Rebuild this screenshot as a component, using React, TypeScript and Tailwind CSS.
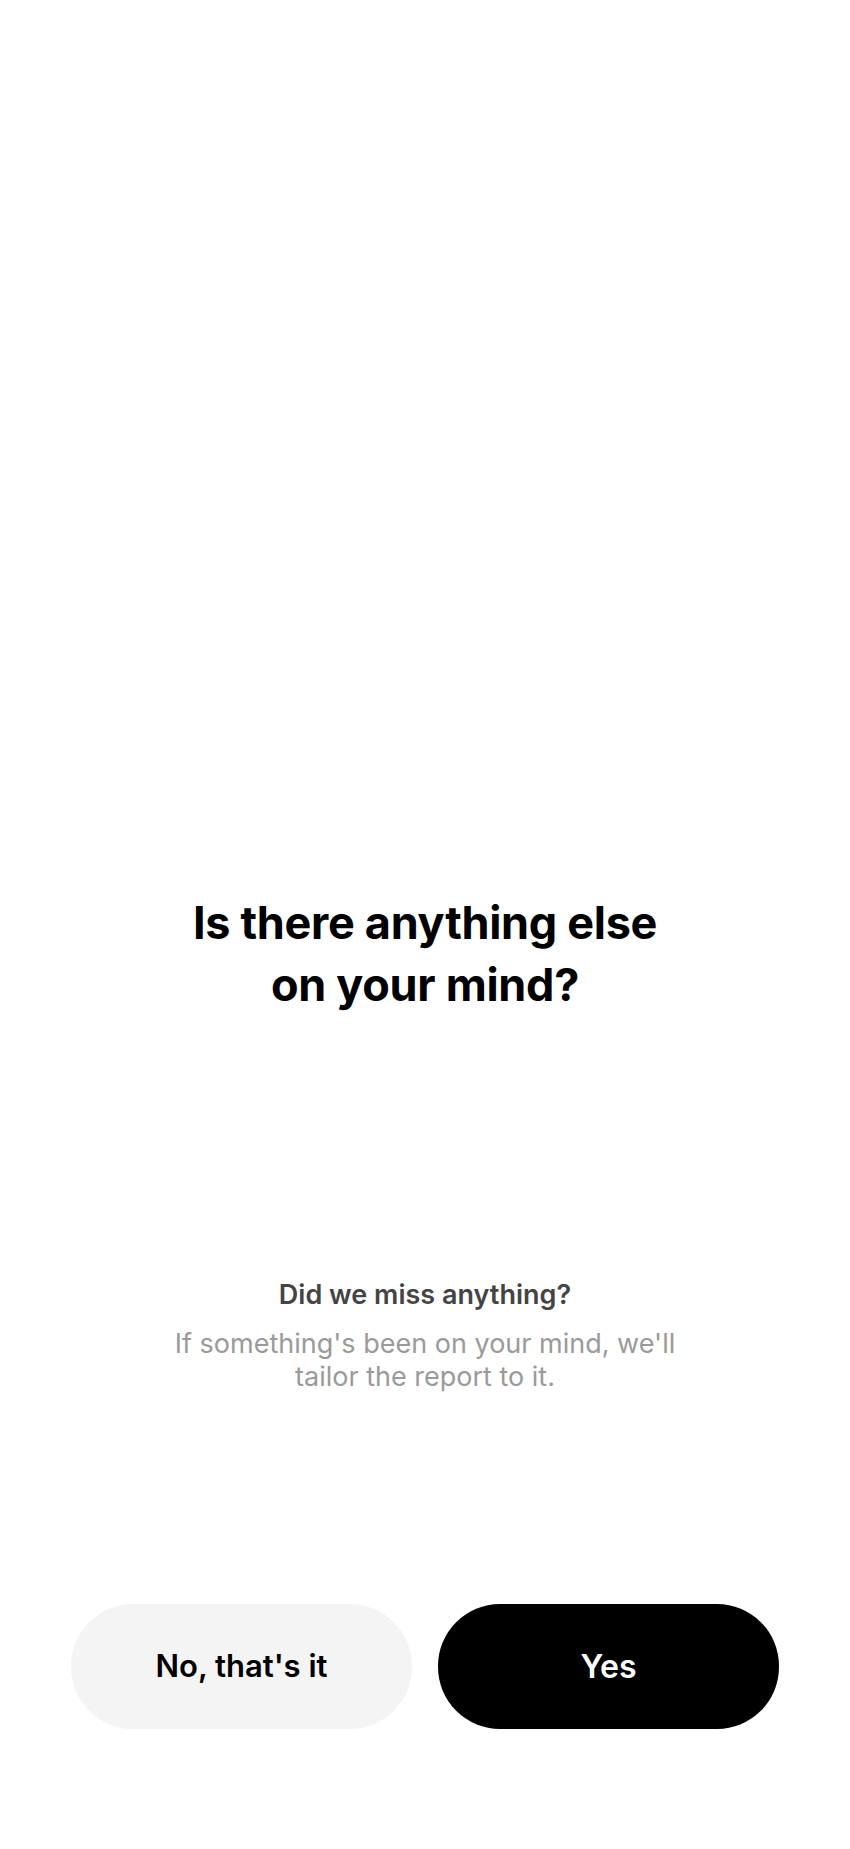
export default function App() {
  return (
    <div
      className="min-h-[1849px] w-full bg-white flex flex-col items-center"
      style={{ fontFamily: "Inter, 'Noto Sans', sans-serif" }}
    >
      <h1 className="pt-[892px] text-center text-[45px] leading-[62px] font-bold text-black tracking-[-0.3px]">
        Is there anything else
        <br />
        on your mind?
      </h1>

      <div className="mt-[262px] flex flex-col items-center text-center">
        <p className="text-[27px] leading-[34px] font-semibold text-[#444444]">Did we miss anything?</p>
        <p className="mt-[15px] text-[27px] leading-[33px] text-[#9a9a9a]">
          If something's been on your mind, we'll
          <br />
          tailor the report to it.
        </p>
      </div>

      <div className="mt-[211px] w-full px-[71px] flex gap-[26px]">
        <button className="flex-1 h-[125px] rounded-[62px] bg-[#f4f4f4] text-black text-[31px] font-semibold">
          No, that's it
        </button>
        <button className="flex-1 h-[125px] rounded-[62px] bg-black text-white text-[32px] font-semibold">
          Yes
        </button>
      </div>
    </div>
  )
}
